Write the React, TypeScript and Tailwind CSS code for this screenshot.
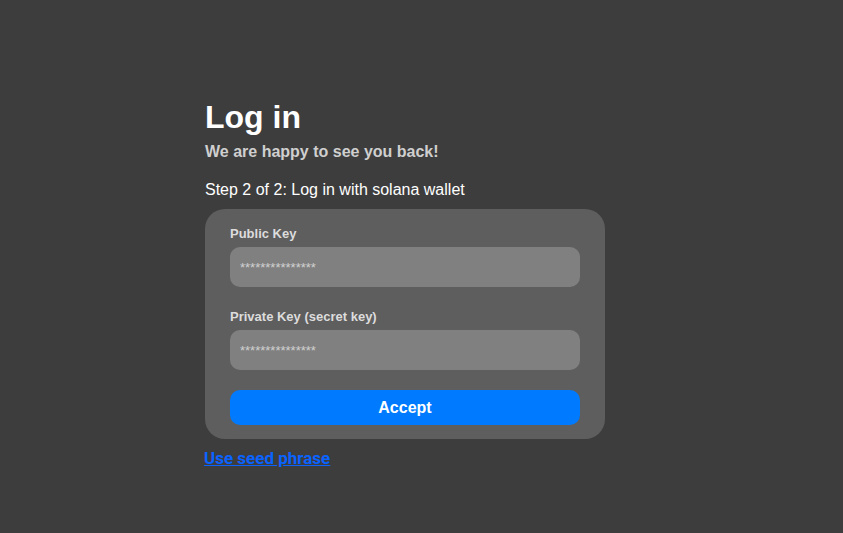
import React from 'react';

const Field: React.FC<{ label: string }> = ({ label }) => (
  <div className="flex flex-col">
    <label className="text-[13px] font-bold text-[#dcdcdc] leading-[15px] mb-[6px]">{label}</label>
    <input
      type="password"
      placeholder="***************"
      className="h-[40px] w-full rounded-[10px] bg-[#808080] px-[10px] text-[13px] text-white placeholder:text-[#d0d0d0] outline-none"
    />
  </div>
);

export default function App() {
  return (
    <div className="min-h-[533px] w-full bg-[#3d3d3d] font-['Liberation_Sans',Arial,sans-serif]">
      <div className="flex w-[605px] flex-col pl-[205px] pt-[99px]">
        <h1 className="text-[32px] font-bold leading-[37px] text-white">Log in</h1>
        <p className="mt-[7px] text-[16px] font-bold leading-[18px] text-[#cfcfcf]">We are happy to see you back!</p>
        <p className="mt-[20px] text-[16px] leading-[18px] text-white">Step 2 of 2: Log in with solana wallet</p>

        <div className="mt-[10px] flex flex-col rounded-[20px] bg-[#5e5e5e] px-[25px] pt-[17px] pb-[14px]">
          <Field label="Public Key" />
          <div className="mt-[22px]">
            <Field label="Private Key (secret key)" />
          </div>
          <button className="mt-[20px] h-[35px] w-full rounded-[10px] bg-[#007bff] text-[16px] font-bold text-white">
            Accept
          </button>
        </div>

        <a href="#" className="mt-[9px] self-start font-['Roboto',sans-serif] text-[17px] font-bold leading-[20px] text-[#0a63ff] underline -ml-[1px]">
          Use seed phrase
        </a>
      </div>
    </div>
  );
}
